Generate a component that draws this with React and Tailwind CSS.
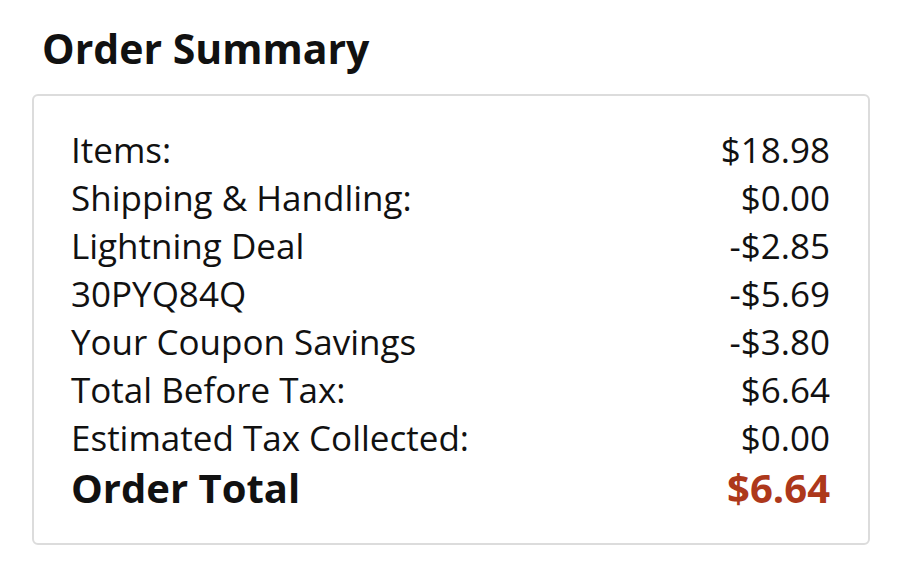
export default function App() {
  const rows = [
    ["Items:", "$18.98"],
    ["Shipping & Handling:", "$0.00"],
    ["Lightning Deal", "-$2.85"],
    ["30PYQ84Q", "-$5.69"],
    ["Your Coupon Savings", "-$3.80"],
    ["Total Before Tax:", "$6.64"],
    ["Estimated Tax Collected:", "$0.00"],
  ];
  return (
    <div className="w-[900px] h-[572px] bg-white overflow-hidden text-[#111111]" style={{ fontFamily: '"Open Sans", sans-serif' }}>
      <div className="pt-[24px] pl-[42px] text-[41px] font-bold leading-[48px]">Order Summary</div>
      <div className="mt-[22px] ml-[32px] w-[838px] h-[451px] border-2 border-[#dcdcdc] rounded-[6px] pl-[37px] pr-[38px] pt-[30px]">
        {rows.map(([l, v]) => (
          <div key={l} className="flex justify-between text-[35px] leading-[48px]">
            <span>{l}</span>
            <span>{v}</span>
          </div>
        ))}
        <div className="flex justify-between text-[40px] font-bold leading-[52px]">
          <span>Order Total</span>
          <span className="text-[#ad381b]">$6.64</span>
        </div>
      </div>
    </div>
  );
}
